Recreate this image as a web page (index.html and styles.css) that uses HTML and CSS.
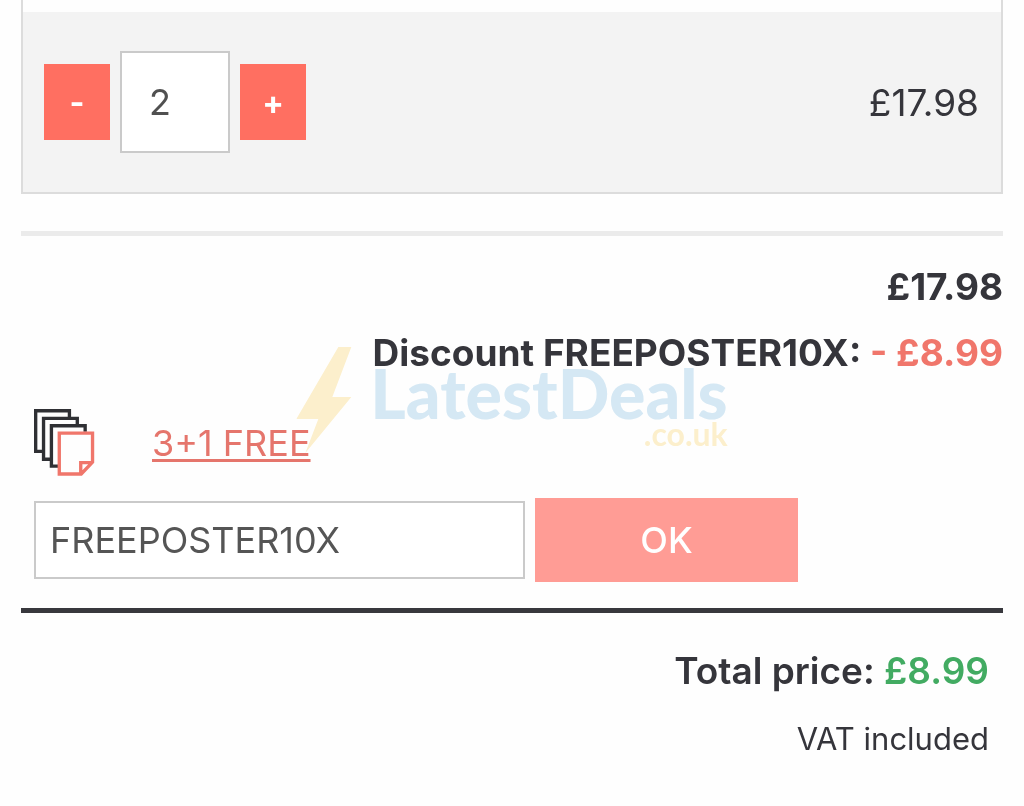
FILE: index.html
```html
<!DOCTYPE html>
<html lang="en">
<head>
<meta charset="utf-8">
<meta name="viewport" content="width=device-width, initial-scale=1">
<title>Basket</title>
<link rel="stylesheet" href="styles.css">
</head>
<body>
<main class="basket">
  <section class="item">
    <div class="item-row">
      <div class="stepper">
        <button class="step" type="button" aria-label="Decrease quantity">-</button>
        <input class="quantity" type="text" inputmode="numeric" value="2" aria-label="Quantity">
        <button class="step" type="button" aria-label="Increase quantity">+</button>
      </div>
      <span class="item-price">£17.98</span>
    </div>
  </section>

  <section class="summary">
    <p class="summary-line">£17.98</p>
    <p class="summary-line">Discount FREEPOSTER10X: <span class="discount">- £8.99</span></p>
    <div class="offer">
      <svg class="offer-icon" viewBox="0 0 62 68" fill="none" stroke-width="3.4" aria-hidden="true">
        <g stroke="#2f3034">
          <path d="M9 43H1.700V1.700H36V8"/>
          <path d="M17 51H9.700V9.500H44V16"/>
          <path d="M25 58H17.700V17H52V23"/>
        </g>
        <path stroke="#f0766b" d="M25.700 24.500H59.500V54L48 66H25.700ZM47.500 66V54.500H59.500"/>
      </svg>
      <a class="offer-link" href="#">3+1 FREE</a>
    </div>
    <form class="coupon">
      <input class="coupon-code" type="text" value="FREEPOSTER10X" aria-label="Discount code">
      <button class="coupon-submit" type="button">OK</button>
    </form>
    <div class="watermark" aria-hidden="true">
      <svg class="bolt" viewBox="0 0 56 106"><path fill="#fdf0cd" d="M42 0H55L36 50H55L9 106L22 72H0Z"/></svg>
      <div class="brand">
        <span class="brand-name">LatestDeals</span>
        <span class="brand-domain">.co.uk</span>
      </div>
    </div>
  </section>

  <section class="total">
    <p class="total-line">Total price: <span class="total-price">£8.99</span></p>
    <p class="vat">VAT included</p>
  </section>
</main>
</body>
</html>
```
FILE: styles.css
```css
* {
  box-sizing: border-box;
}

body {
  margin: 0;
  background: #fefefe;
  color: #35353b;
  font-family: Inter, "Liberation Sans", sans-serif;
  font-size: 36px;
}

p {
  margin: 0;
}

button,
input {
  border: 0;
  border-radius: 0;
  font: inherit;
}

.basket {
  padding: 0 21px;
}

.item {
  padding-top: 12px;
  border: 2px solid #dcdcdc;
  border-top: 0;
}

.item-row {
  display: flex;
  align-items: center;
  justify-content: space-between;
  height: 180px;
  padding: 0 22px 0 21px;
  background: #f3f3f3;
}

.item-price {
  font-size: 37px;
}

.stepper {
  display: flex;
  align-items: center;
  gap: 10px;
}

.step {
  width: 66px;
  height: 76px;
  padding: 0;
  background: #ff6f61;
  color: #fff;
  font-size: 32px;
  font-weight: 700;
}

.quantity {
  width: 110px;
  height: 102px;
  padding: 0 27px;
  border: 2px solid #cacaca;
  background: #fff;
  color: #505050;
}

.summary {
  position: relative;
  margin-top: 37px;
  padding: 18px 0 26px;
  border-top: 5px solid #ebebeb;
  border-bottom: 5px solid #38383d;
}

.summary-line {
  font-size: 37px;
  font-weight: 700;
  line-height: 66px;
  text-align: right;
}

.discount {
  color: #f0766b;
}

.offer {
  display: flex;
  align-items: center;
  gap: 57px;
  margin: 23px 13px 0;
}

.offer-icon {
  width: 61px;
  height: 67px;
}

.offer-link {
  color: #e5756c;
  text-decoration-thickness: 3px;
  text-underline-offset: 3px;
}

.coupon {
  display: grid;
  grid-template-columns: 15fr 8fr;
  align-items: center;
  gap: 10px;
  width: 80%;
  margin: 22px 0 0;
  padding: 0 9px 0 13px;
}

.coupon-code {
  min-width: 0;
  height: 78px;
  padding: 0 14px;
  border: 2px solid #cacaca;
  background: #fff;
  color: #555;
}

.coupon-submit {
  height: 84px;
  background: #ff9c95;
  color: #fff;
  font-weight: 500;
}

.watermark {
  position: absolute;
  top: 111px;
  left: 50%;
  display: flex;
  gap: 18px;
  transform: translateX(-50%);
  pointer-events: none;
  mix-blend-mode: multiply;
}

.bolt {
  width: 56px;
  height: 106px;
}

.brand {
  display: flex;
  flex-direction: column;
  align-items: flex-end;
  padding-top: 16px;
  font-family: Lato, sans-serif;
}

.brand-name {
  color: #d6e9f5;
  font-size: 68px;
  font-weight: 900;
  line-height: 60px;
}

.brand-domain {
  color: #fdf0cd;
  font-size: 32px;
  font-weight: 700;
  line-height: 22px;
}

.total {
  padding: 24px 14px 20px;
  text-align: right;
}

.total-line {
  font-size: 37px;
  font-weight: 600;
  line-height: 68px;
}

.total-price {
  color: #42ab62;
}

.vat {
  font-size: 31px;
  line-height: 68px;
}
```
